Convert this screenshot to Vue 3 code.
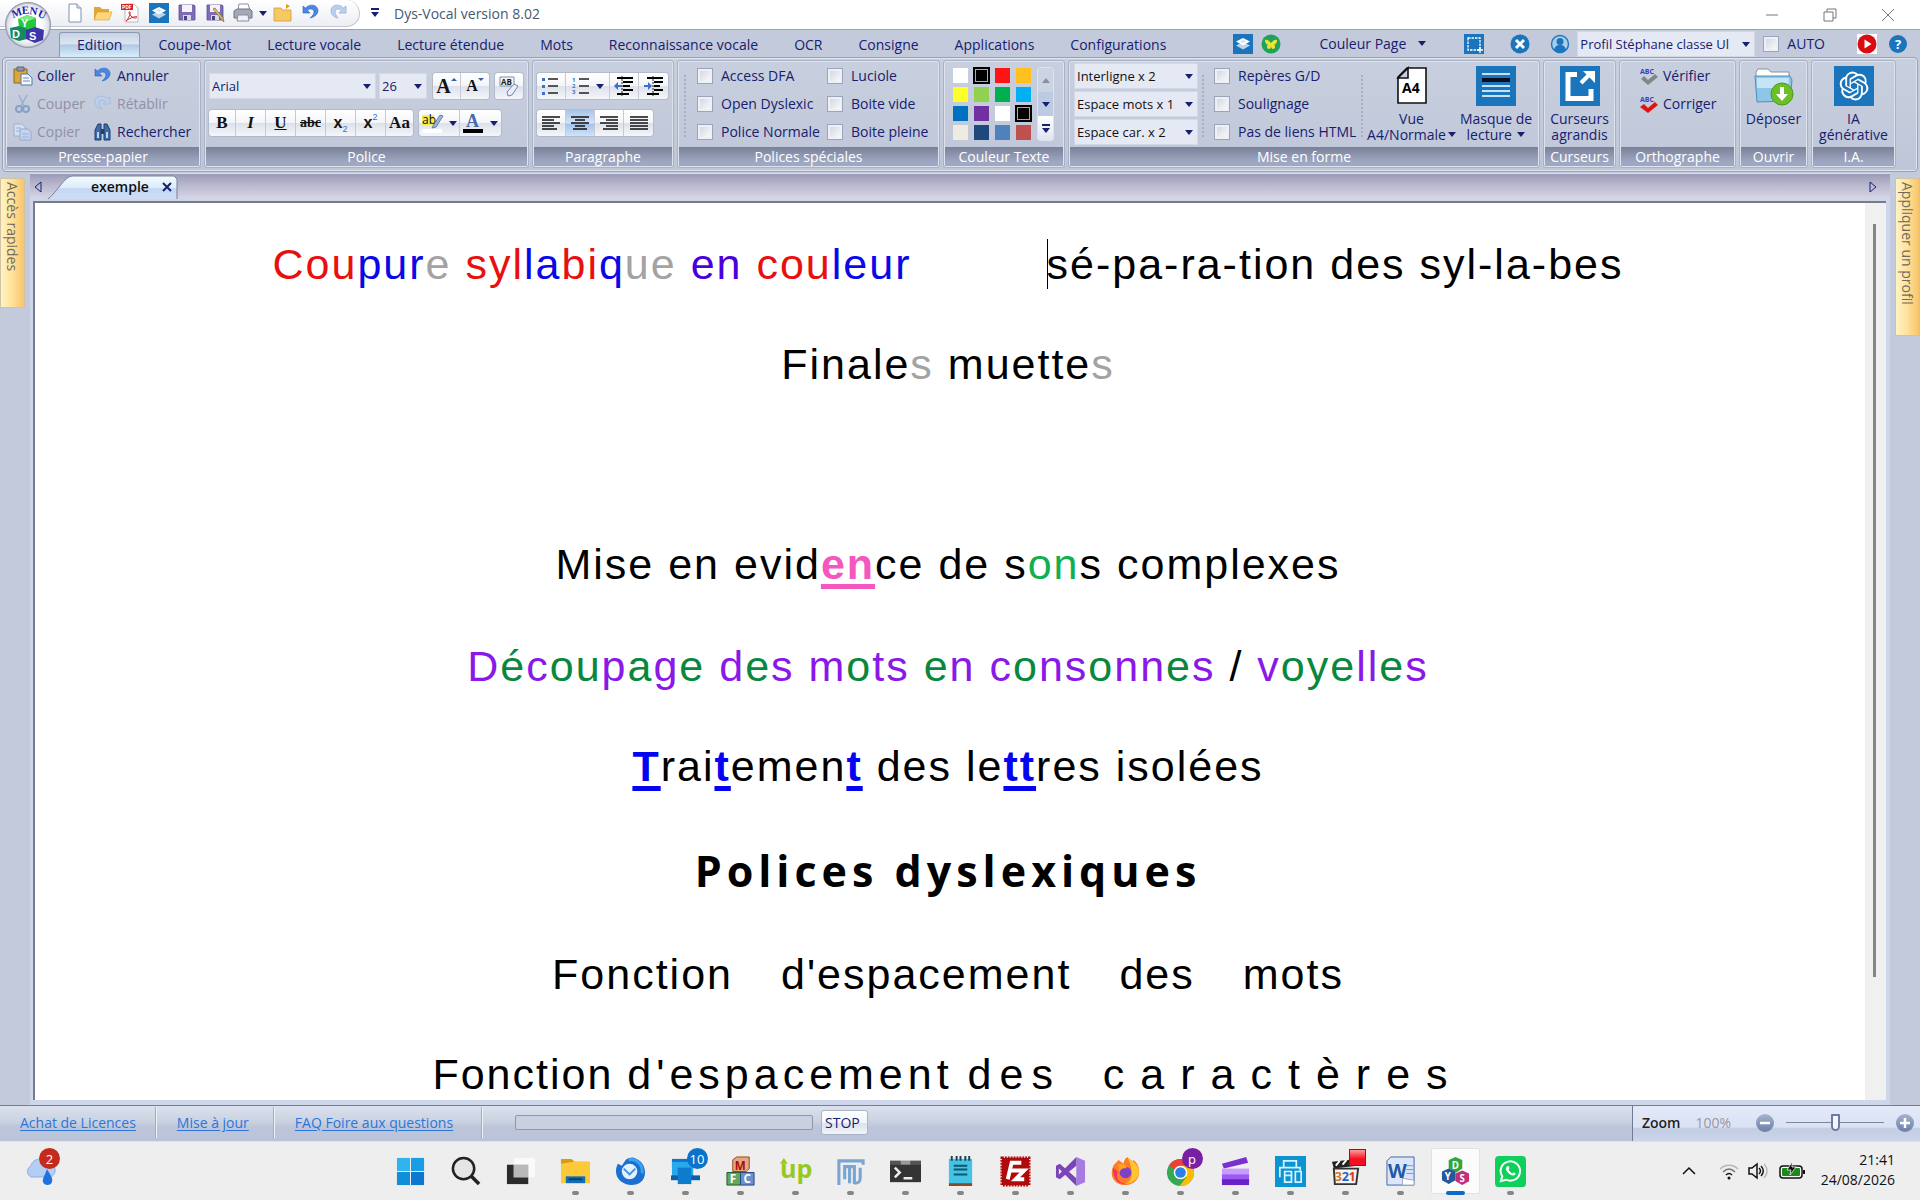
<script setup>
import { ref } from 'vue'

const tabs = ['Edition', 'Coupe-Mot', 'Lecture vocale', 'Lecture étendue', 'Mots', 'Reconnaissance vocale', 'OCR', 'Consigne', 'Applications', 'Configurations']
const colours = ['#ffffff', '#000000', '#ff1414', '#ffc020', '#ffff28', '#92d050', '#00b050', '#00b0f0', '#0070c0', '#7030a0', '#ffffff', '#000000', '#eeece1', '#1f497d', '#4f81bd', '#c0504d']
const spacings = [
  { label: 'Interligne', value: 'Interligne x 2' },
  { label: 'Espace mots', value: 'Espace mots x 1' },
  { label: 'Espace caractères', value: 'Espace car. x 2' },
]
const zoom = ref(50)

const undo = '<path d="M2 3v7h7L6.500 7.500C9 5 13 6 13 9c0 2-1.500 4-4 6 5-1 8-4 8-7.500C17 2 9 0 4.500 5z" fill="#4d86e0" stroke="#2a5fc0" stroke-width=".6"/>'
const redo = '<path d="M17 3v7h-7l2.500-2.500C10 5 6 6 6 9c0 2 1.500 4 3 6C4 14 2 11 2 7.500 2 2 10 0 14.500 5z" fill="#b9d0f2" stroke="#8fb0df" stroke-width=".8"/>'
const layers = '<path d="M0 0h20v20H0z" fill="#1b75bc"/><path d="M10 8l7 3.500-7 4-7-4z" fill="#bcd4ea"/><path d="M10 4l7 3.500-7 4-7-4z" fill="#fff"/><path d="M7 7.500l3-1.500 3 1.500-3 1.500z" fill="#cfe2f2"/>'
const folder = '<path d="M1 4h6l2 2h7v11H1z" fill="#e0a63a"/><path d="M4 9h15l-3 8H1z" fill="#ffd778" stroke="#d99a2b" stroke-width=".6"/>'
const floppy = '<path d="M2 2h15l1 1v14H2z" fill="#7e6cb8" stroke="#5d4c9b" stroke-width=".8"/><path d="M5 2h10v7H5z" fill="#f4f3fb"/><path d="M6 12h8v5H6z" fill="#d8d8e8"/><path d="M7 13h3v4H7z" fill="#4c4273"/>'

const icons = {
  newDoc: '<path d="M4 1h8l4 4v14H4z" fill="#fff" stroke="#7f93b8"/><path d="M12 1v4h4" fill="#dde6f4" stroke="#7f93b8"/>',
  open: folder,
  pdf: '<path d="M4 1h9l4 4v14H4z" fill="#fff" stroke="#b8b8b8"/><path d="M0 1h12v6H0z" fill="#d3232a"/><text x="1" y="6" font-size="5" font-weight="bold" fill="#fff">PDF</text><path d="M5 18c3-3 5-8 4-9s-2 1 1 4 6 2 6 1-6 0-11 4z" fill="none" stroke="#d3232a"/>',
  layers, save: floppy,
  saveEdit: floppy + '<path d="M8 6l9 11 2 2-1-4-8-10z" fill="#e6c75b" stroke="#6b6b3a" stroke-width=".7"/>',
  print: '<path d="M6 1h9l2 6H5z" fill="#fff" stroke="#8a8f9c"/><path d="M1 8l3-2h13l2 2v7H1z" fill="#a4a9b5" stroke="#6d7382"/><path d="M5 12h10l1 6H4z" fill="#eef1f8" stroke="#8a8f9c"/>',
  folderUp: '<path d="M1 5h7l2 2h8v11H1z" fill="#f7c963" stroke="#d39b35" stroke-width=".8"/><path d="M13 6V1l4 2z" fill="#e59b1c"/>',
  undo, redo,
  paste: '<path d="M1 3h13v14H1z" fill="#dba63c" stroke="#8b6420"/><path d="M4 1h7v4H4z" fill="#8e95a5" stroke="#5c6475"/><path d="M8 8h7l4 4v7H8z" fill="#f5f8ff" stroke="#5577a8"/><path d="M10 12h6M10 15h7" stroke="#6a8cc0"/>',
  cut: '<path d="M6 1l5 11M14 1L8 12" stroke="#8ea6c9" stroke-width="1.600"/><circle cx="6" cy="15" r="3" fill="none" stroke="#6d8fc2" stroke-width="2"/><circle cx="13" cy="15" r="3" fill="none" stroke="#6d8fc2" stroke-width="2"/>',
  copy: '<path d="M1 2h8l3 3v9H1z" fill="#dce7f6" stroke="#8aa8d4"/><path d="M7 7h8l3 3v8H7z" fill="#c7daf3" stroke="#7f9fd0"/><path d="M9 12h7M9 15h7M3 6h5M3 9h4" stroke="#8aa8d4"/>',
  find: '<path d="M2 8l3-6h3v16H2zM17 8l-3-6h-3v16h6z" fill="#3f6aa8" stroke="#20406f"/><path d="M8 7h3v5H8z" fill="#20406f"/><path d="M4 10h2v6H4zM13 10h2v6h-2z" fill="#b9d3f2"/>',
  clear: '<path d="M1 1h14v9H1z" fill="#f4f6fa" stroke="#8190ab"/><text x="2" y="9" font-size="8" font-weight="bold" fill="#222">AB</text><path d="M8 16l7-8 4 2-6 9-4 1z" fill="#e8eefa" stroke="#7684a8"/>',
  highlight: '<path d="M0 3h12v10H0z" fill="#f3ee4a"/><text x="0" y="12" font-size="12" fill="#111">ab</text><path d="M11 14l7-11 3 1-7 11-4 1z" fill="#9db8e0" stroke="#4a6694" stroke-width=".8"/><path d="M0 17h20v4H0z" fill="#fff"/>',
  fontColor: '<text x="3" y="15" font-size="18" font-family="Liberation Serif, serif" font-weight="bold" fill="#4668a8">A</text><path d="M0 17h20v4H0z" fill="#000"/>',
  bullets: '<path d="M7 3h10M7 10h10M7 17h10" stroke="#222" stroke-width="1.400"/><path d="M1 2h3v3H1zM1 9h3v3H1zM1 16h3v3H1z" fill="#3c6fd0"/>',
  numbers: '<path d="M8 3h10M8 10h10M8 17h10" stroke="#222" stroke-width="1.400"/><g font-size="6" font-weight="bold" fill="#3c6fd0"><text x="1" y="6">1</text><text x="1" y="12">2</text><text x="1" y="18">3</text></g>',
  outdent: '<path d="M3 2h16M9 6h10M9 10h7M9 14h10M3 18h12" stroke="#000" stroke-width="1.800"/><path d="M8 0v20" stroke="#222" stroke-dasharray="2 1"/><path d="M0 10l4-4v3h4v2H4v3z" fill="#3c6fd0"/>',
  indent: '<path d="M3 2h16M10 6h9M10 10h6M10 14h9M3 18h12" stroke="#000" stroke-width="1.800"/><path d="M9 0v20" stroke="#222" stroke-dasharray="2 1"/><path d="M8 10L4 6v3H0v2h4v3z" fill="#3c6fd0"/>',
  left: '<path d="M1 4h18M1 7h12M1 10h18M1 13h12M1 16h15" stroke="#111" stroke-width="1.500"/>',
  center: '<path d="M1 4h18M5 7h10M1 10h18M5 13h10M3 16h14" stroke="#111" stroke-width="1.500"/>',
  right: '<path d="M1 4h18M7 7h12M1 10h18M7 13h12M4 16h15" stroke="#111" stroke-width="1.500"/>',
  justify: '<path d="M1 4h18M1 7h18M1 10h18M1 13h18M1 16h18" stroke="#111" stroke-width="1.500"/>',
  butterfly: '<circle cx="10" cy="10" r="9.500" fill="#1fa35b"/><path d="M10 9C8 6 5 5 4 6c0 3 1 4 3 5-2 1-1 4 1 4 1 0 2-1 2-3 0 2 1 3 2 3 2 0 3-3 1-4 2-1 3-2 3-5-1-1-4 0-6 3z" fill="#f2e230"/>',
  crop: '<path d="M0 0h20v20H0z" fill="#1b75bc"/><path d="M4 4h12v12H4z" fill="none" stroke="#fff" stroke-width="1.300" stroke-dasharray="2.500 1"/><path d="M16 13v6M13 16h6" stroke="#fff" stroke-width="1.300"/>',
  close: '<circle cx="10" cy="10" r="9.500" fill="#1b75bc"/><path d="M6 6l8 8M14 6l-8 8" stroke="#fff" stroke-width="3"/>',
  user: '<circle cx="10" cy="10" r="8.500" fill="#a9cdea" stroke="#1b75bc" stroke-width="1.400"/><circle cx="10" cy="7.500" r="3.500" fill="#1b75bc"/><path d="M4 16c1-4 3-5 6-5s5 1 6 5c-3 3-9 3-12 0z" fill="#1b75bc"/>',
  play: '<path d="M0 0h20v20H0z" fill="#fff"/><circle cx="10" cy="10" r="9.500" fill="#d80d12"/><path d="M7.500 5.500l7 4.500-7 4.500z" fill="#fff"/>',
  help: '<circle cx="10" cy="10" r="9" fill="#1b75bc"/><text x="7" y="15" font-size="13" font-weight="bold" fill="#fff">?</text>',
  a4: '<path d="M15 2h19v35H6V11z" fill="#fff" stroke="#111" stroke-width="1.600"/><path d="M16 2v10H6z" fill="#c9cddc" stroke="#111" stroke-width="1.600"/><text x="10" y="27" font-size="14" font-weight="bold" fill="#000">A4</text>',
  mask: '<path d="M0 0h40v40H0z" fill="#1b75bc"/><path d="M6 8h28M6 20h28M6 25h28M6 30h28" stroke="#c6e2f5" stroke-width="2"/><path d="M6 14h28" stroke="#0a1020" stroke-width="4"/>',
  cursor: '<path d="M0 0h40v40H0z" fill="#1b75bc"/><path d="M17 8.500H8v24h23V23" fill="none" stroke="#fff" stroke-width="5"/><path d="M21 17l8-8" stroke="#fff" stroke-width="4"/><path d="M23 5h12v12z" fill="#fff"/>',
  deposit: '<path d="M2 6l2-3h10l3 3h18v8H2z" fill="#fff" stroke="#8a8f9c"/><path d="M1 10h35l2 4-2 21-33 1z" fill="#8fc6e8" stroke="#4d8fb8"/><path d="M3 12h32l-1 10H3z" fill="#c5e5f6"/><circle cx="28" cy="28" r="11" fill="#6cbf26" stroke="#4d9a18"/><path d="M26 21h4v7h4l-6 7-6-7h4z" fill="#fff"/>',
  gpt: '<path d="M0 0h40v40H0z" fill="#1b75bc"/><path transform="translate(5.600 5.600) scale(1.200)" fill="#fff" d="M22.2819 9.8211a5.9847 5.9847 0 0 0-.5157-4.9108 6.0462 6.0462 0 0 0-6.5098-2.9A6.0651 6.0651 0 0 0 4.9807 4.1818a5.9847 5.9847 0 0 0-3.9977 2.9 6.0462 6.0462 0 0 0 .7427 7.0966 5.98 5.98 0 0 0 .511 4.9107 6.051 6.051 0 0 0 6.5146 2.9001A5.9847 5.9847 0 0 0 13.2599 24a6.0557 6.0557 0 0 0 5.7718-4.2058 5.9894 5.9894 0 0 0 3.9977-2.9001 6.0557 6.0557 0 0 0-.7475-7.0729zm-9.022 12.6081a4.4755 4.4755 0 0 1-2.8764-1.0408l.1419-.0804 4.7783-2.7582a.7948.7948 0 0 0 .3927-.6813v-6.7369l2.02 1.1686a.071.071 0 0 1 .038.052v5.5826a4.504 4.504 0 0 1-4.4945 4.4944zm-9.6607-4.1254a4.4708 4.4708 0 0 1-.5346-3.0137l.142.0852 4.783 2.7582a.7712.7712 0 0 0 .7806 0l5.8428-3.3685v2.3324a.0804.0804 0 0 1-.0332.0615L9.74 19.9502a4.4992 4.4992 0 0 1-6.1408-1.6464zM2.3408 7.8956a4.485 4.485 0 0 1 2.3655-1.9728V11.6a.7664.7664 0 0 0 .3879.6765l5.8144 3.3543-2.0201 1.1685a.0757.0757 0 0 1-.071 0l-4.8303-2.7865A4.504 4.504 0 0 1 2.3408 7.872zm16.5963 3.8558L13.1038 8.364 15.1192 7.2a.0757.0757 0 0 1 .071 0l4.8303 2.7913a4.4944 4.4944 0 0 1-.6765 8.1042v-5.6772a.79.79 0 0 0-.407-.667zm2.0107-3.0231l-.142-.0852-4.7735-2.7818a.7759.7759 0 0 0-.7854 0L9.409 9.2297V6.8974a.0662.0662 0 0 1 .0284-.0615l4.8303-2.7866a4.4992 4.4992 0 0 1 6.6802 4.66zM8.3065 12.863l-2.02-1.1638a.0804.0804 0 0 1-.038-.0567V6.0742a4.4992 4.4992 0 0 1 7.3757-3.4537l-.142.0805L8.704 5.459a.7948.7948 0 0 0-.3927.6813zm1.0976-2.3654l2.602-1.4998 2.6069 1.4998v2.9994l-2.5974 1.4997-2.6067-1.4997Z"/>',
  check: '<text x="1" y="8" font-size="7" font-weight="bold" fill="#3a3fc0">ABC</text><path d="M2 13l3-3 4 4 7-6 3 3-10 8z" fill="#7d8a86"/>',
  correct: '<text x="1" y="8" font-size="7" font-weight="bold" fill="#3a3fc0">ABC</text><path d="M1 13l4-3 4 4 7-6 3 3-10 8z" fill="#e01212"/>',
}

const apps = [
  { name: 'Démarrer', svg: '<path d="M2 2h13.500v13.500H2z" fill="#31b4ee"/><path d="M16.500 2H30v13.500H16.500z" fill="#179ee4"/><path d="M2 16.500h13.500V30H2z" fill="#0f8fd9"/><path d="M16.500 16.500H30V30H16.500z" fill="#0a78cf"/>' },
  { name: 'Rechercher', svg: '<circle cx="14" cy="13" r="11" fill="#e3e6e8" stroke="#222" stroke-width="2.600"/><path d="M22 21l8 8" stroke="#222" stroke-width="3.600"/>' },
  { name: 'Vue des tâches', svg: '<path d="M2 9h22v20H2z" fill="#2b2b2b"/><path d="M9 2h22v20H9z" fill="#fff" opacity=".72"/><path d="M9 9h15v13H9z" fill="#b9b9b9"/>' },
  { name: 'Explorateur', dot: 1, svg: '<path d="M1 3h11l3 3h15v5H1z" fill="#d99a10"/><path d="M1 8l13-2h17v22H1z" fill="#fbc93a"/><path d="M6 21h20v7H6z" fill="#0e6fb8"/><path d="M9 24h14" stroke="#063e74" stroke-width="2"/>' },
  { name: 'Thunderbird', dot: 1, svg: '<path d="M3 8l4 2 4-6c3-2 6-3 9-2 7 2 11 8 11 15 0 8-6 13-14 13S1 24 1 16c0-4 1-6 2-8z" fill="#1b6fd2"/><path d="M14 4c9-2 15 6 14 14" fill="none" stroke="#3ba2ee" stroke-width="3"/><circle cx="15" cy="16" r="8" fill="#e2f0ff"/><path d="M9 13l6 6 6-6" fill="none" stroke="#4b8ed8" stroke-width="2"/>' },
  { name: 'Notifications', dot: 1, badge: '10', tone: 'blue', svg: '<path d="M2 3h22v9H2z" fill="#1173c9"/><path d="M2 6h22v17H2z" fill="#29a8ea"/><path d="M1 20h30v5H1z" fill="#0f5fa8"/><path d="M8 12h14v17H8z" fill="#0d7ccf"/>' },
  { name: 'MFC', dot: 1, svg: '<path d="M8 4l4-3h13v12l-3 3H8z" fill="#e9a57e" stroke="#8a4a20"/><path d="M2 17h14v13H2z" fill="#5fa95c" stroke="#265a28"/><path d="M16 17h14v13H16z" fill="#6a8fd0" stroke="#274880"/><text x="10" y="14" font-size="12" font-weight="bold" fill="#a01010">M</text><text x="5" y="28" font-size="12" font-weight="bold" fill="#fff">F</text><text x="19" y="28" font-size="12" font-weight="bold" fill="#fff">C</text>' },
  { name: 'Upwork', dot: 1, svg: '<text x="0" y="23" font-size="26" font-weight="bold" fill="#97c81d">up</text><path d="M0 8l4-6 4 6z" fill="#97c81d"/>' },
  { name: 'pgModeler', dot: 1, svg: '<path d="M4 30V5h25v4M10 24V11h5v17M15 11h5v18M26 12v11c0 4-2 5-6 5" fill="none" stroke="#78a5d2" stroke-width="3.200"/>' },
  { name: 'Terminal', dot: 1, svg: '<path d="M0 5h32v22H0z" fill="#343434"/><path d="M0 5h11v4H0zM21 5h11v4H21z" fill="#555"/><path d="M11 5h10v4H11z" fill="#999"/><path d="M5 12l5 5-5 5M14 23h9" fill="none" stroke="#eee" stroke-width="2.600"/>' },
  { name: 'Bloc-notes', dot: 1, svg: '<path d="M4 3h24v25H4z" fill="#45c3e4"/><path d="M9 10h14M9 14h14M9 19h14" stroke="#0b5570" stroke-width="2"/><path d="M7 0v5M12 0v5M16 0v5M21 0v5M25 0v5" stroke="#134454" stroke-width="2"/><path d="M4 28h24v3H4z" fill="#8b4a22"/>' },
  { name: 'FileZilla', dot: 1, svg: '<path d="M2 2h28v28H2z" fill="#b10a0a" stroke="#b10a0a" stroke-width="3" stroke-dasharray="2 1"/><path d="M8 24l4-17h10M9.500 15h8M16 15h9l-9 9h9" fill="none" stroke="#fff" stroke-width="4"/>' },
  { name: 'Visual Studio', dot: 1, svg: '<path d="M22 1l9 4v22l-9 4z" fill="#a77be0"/><path d="M22 1v9L5 24l-4-2V10l4-2 17 15v8L4 13v6z" fill="#7b45b8"/>' },
  { name: 'Firefox', dot: 1, svg: '<path d="M4 9c-6 12 1 21 12 21 9 0 15-7 14-15 0-5-3-9-6-11l-1 5-5-8c-3 2-4 5-4 7l-5-4z" fill="#ff7a2a"/><path d="M18 1c4 3 12 8 12 15 0 8-8 13-15 13 9-3 10-13 3-28z" fill="#ffc52e"/><path d="M3 12c0 12 6 18 15 17-8 0-13-6-10-13z" fill="#f2335b"/><circle cx="16" cy="17" r="6" fill="#7a42c8"/><path d="M8 9c5-2 10 0 9 4-3-1-7 1-7 4z" fill="#ffa31f"/>' },
  { name: 'Chrome', dot: 1, badge: 'p', tone: 'violet', svg: '<circle cx="16" cy="17" r="14" fill="#34a853"/><path d="M4 10a14 14 0 0 1 24 0L16 17z" fill="#ea4335"/><path d="M28 10H16l6 12-7 9a14 14 0 0 0 13-21z" fill="#fbbc05"/><circle cx="16" cy="17" r="7" fill="#fff"/><circle cx="16" cy="17" r="5.500" fill="#2f7de9"/>' },
  { name: 'Clipchamp', dot: 1, svg: '<path d="M2 8L27 1l2 6L4 13z" fill="#7a2fd0"/><path d="M2 13h28v8H2z" fill="#c79bff"/><path d="M2 19h28v7H2z" fill="#9a5cf0"/><path d="M2 24h28v6H2z" fill="#6a22c8"/>' },
  { name: 'Imprimante', dot: 1, svg: '<path d="M0 0h32v32H0z" fill="#0c93d2"/><path d="M9 11V5h13v6M5 22V12h21v3M10 16h7v11h-7zM10 20h7M21 16h6v11h-6z" fill="none" stroke="#d6f1ff" stroke-width="1.800"/>' },
  { name: 'Lecteur 321', dot: 1, square: 1, svg: '<path d="M2 6l26-3v7L4 13z" fill="#222"/><path d="M6 10l4-5M13 9l4-5M20 8l4-5" stroke="#fff" stroke-width="2"/><path d="M4 13h25l-2 16H5z" fill="#f4f4f4" stroke="#333" stroke-width="2"/><text x="5" y="26" font-size="13" font-weight="bold" fill="#d87a20">3</text><text x="12" y="26" font-size="13" font-weight="bold" fill="#2064c8">2</text><text x="19" y="26" font-size="13" font-weight="bold" fill="#d83a20">1</text>' },
  { name: 'Word', dot: 1, svg: '<path d="M2 5l4-4h24v29H2z" fill="#dbe6f8" stroke="#3b66ac"/><path d="M22 10h7M22 14h7M22 18h7" stroke="#6f95cf"/><text x="3" y="23" font-size="20" font-weight="bold" fill="#2257a8">W</text><path d="M18 23l12 2v5H18z" fill="#fff" stroke="#9ab"/>' },
  { name: 'Dys-Vocal', dot: 1, active: 1, svg: '<path d="M9 4l7-3 7 3v9l-6 4-8-4z" fill="#2fa838"/><path d="M2 16l7-3 7 3v9l-7 4-7-4z" fill="#28589c"/><path d="M16 18l7-3 7 3v8l-7 4-7-4z" fill="#c0307c"/><text x="12" y="13" font-size="10" font-weight="bold" fill="#fff">D</text><text x="5" y="25" font-size="10" font-weight="bold" fill="#fff">Y</text><text x="20" y="27" font-size="10" font-weight="bold" fill="#fff">S</text>' },
  { name: 'WhatsApp', dot: 1, svg: '<rect width="32" height="32" rx="4" fill="#10d05c"/><path d="M6 26l1.500-5a10 10 0 1 1 4 3.500z" fill="none" stroke="#fff" stroke-width="2"/><path d="M12 11c2-2 3 1 3 2l-1 1c1 2 2 3 4 4l1-1c1 0 3 1 2 2-3 4-12-4-9-8z" fill="#fff"/>' },
]
</script>

<template>
  <div class="app">
    <header class="titlebar">
      <div class="quick">
        <button v-for="n in ['newDoc', 'open', 'pdf', 'layers', 'save', 'saveEdit', 'print']" :key="n" class="plain" :aria-label="n"><svg viewBox="0 0 20 20" class="i20" v-html="icons[n]" /></button>
        <i class="caret" />
        <button v-for="n in ['folderUp', 'undo', 'redo']" :key="n" class="plain" :aria-label="n"><svg viewBox="0 0 20 20" class="i20" v-html="icons[n]" /></button>
      </div>
      <button class="plain more" aria-label="Personnaliser"><i class="bar" /><i class="caret" /></button>
      <span class="title">Dys-Vocal version 8.02</span>
      <div class="win">
        <button class="plain" aria-label="Réduire"><svg viewBox="0 0 14 14"><path d="M1 7h12" /></svg></button>
        <button class="plain" aria-label="Restaurer"><svg viewBox="0 0 14 14"><path d="M1 4h9v9H1zM4 4V1h9v9h-3" /></svg></button>
        <button class="plain" aria-label="Fermer"><svg viewBox="0 0 14 14"><path d="M1 1l12 12M13 1L1 13" /></svg></button>
      </div>
    </header>

    <button class="orb" aria-label="Menu">
      <svg viewBox="0 0 48 48">
        <defs><radialGradient id="orb"><stop offset=".6" stop-color="#fff" /><stop offset=".9" stop-color="#dde0e8" /><stop offset="1" stop-color="#7e8596" /></radialGradient></defs>
        <circle cx="24" cy="24" r="23" fill="url(#orb)" />
        <path d="M14 18l9-4 9 3v9l-8 4-9-4z" fill="#23c93c" /><path d="M14 18l9-4 9 3-8 3z" fill="#7be97f" />
        <path d="M6 27l9-2 8 3v10l-8 2-8-3z" fill="#128a62" /><path d="M22 29l9-3 9 3-1 10-8 3-9-4z" fill="#3c36a8" />
        <text x="17" y="26" class="g">Y</text><text x="8" y="37" class="g">D</text><text x="25" y="39" class="g">S</text>
        <g class="m"><text x="9" y="17" transform="rotate(-20 9 17)">M</text><text x="18" y="13" transform="rotate(-4 18 13)">E</text><text x="25" y="13" transform="rotate(10 25 13)">N</text><text x="33" y="15" transform="rotate(26 33 15)">U</text></g>
      </svg>
    </button>

    <nav class="tabs">
      <button v-for="(t, i) in tabs" :key="t" class="tab" :class="{ on: i === 0 }">{{ t }}</button>
      <div class="tools">
        <button class="plain" aria-label="Calques"><svg viewBox="0 0 20 20" class="i20" v-html="icons.layers" /></button>
        <button class="plain fly" aria-label="Papillon"><svg viewBox="0 0 20 20" class="i20" v-html="icons.butterfly" /></button>
        <button class="plain page">Couleur Page <i class="caret" /></button>
        <button class="plain" aria-label="Capture"><svg viewBox="0 0 20 20" class="i20" v-html="icons.crop" /></button>
        <button class="plain off" aria-label="Arrêter"><svg viewBox="0 0 20 20" class="i20" v-html="icons.close" /></button>
        <button class="plain usr" aria-label="Profil"><svg viewBox="0 0 20 20" class="i20" v-html="icons.user" /></button>
        <span class="pick profile"><select aria-label="Profil"><option>Profil Stéphane classe Ul</option></select><i class="caret" /></span>
        <label class="check auto"><input type="checkbox" />AUTO</label>
        <button class="plain" aria-label="Lire"><svg viewBox="0 0 20 20" class="i20" v-html="icons.play" /></button>
        <button class="plain hlp" aria-label="Aide"><svg viewBox="0 0 20 20" class="i20" v-html="icons.help" /></button>
      </div>
    </nav>

    <div class="ribbon">
      <section class="group clip">
        <div class="body">
          <div class="col wide">
            <button class="cmd"><svg viewBox="0 0 20 20" class="i20" v-html="icons.paste" />Coller</button>
            <button class="cmd" disabled><svg viewBox="0 0 20 20" class="i20" v-html="icons.cut" />Couper</button>
            <button class="cmd" disabled><svg viewBox="0 0 20 20" class="i20" v-html="icons.copy" />Copier</button>
          </div>
          <div class="col">
            <button class="cmd"><svg viewBox="0 0 20 20" class="i20" v-html="icons.undo" />Annuler</button>
            <button class="cmd" disabled><svg viewBox="0 0 20 20" class="i20" v-html="icons.redo" />Rétablir</button>
            <button class="cmd"><svg viewBox="0 0 20 20" class="i20" v-html="icons.find" />Rechercher</button>
          </div>
        </div>
        <h2>Presse-papier</h2>
      </section>

      <section class="group font">
        <div class="body rows">
          <div class="row">
            <span class="pick face"><select aria-label="Police"><option>Arial</option></select><i class="caret" /></span>
            <span class="pick size"><select aria-label="Taille"><option>26</option></select><i class="caret" /></span>
            <div class="bar-group"><button class="big">A<i class="caret up" /></button><button class="mid">A<i class="caret" /></button></div>
            <div class="bar-group"><button aria-label="Effacer"><svg viewBox="0 0 20 20" class="i20" v-html="icons.clear" /></button></div>
          </div>
          <div class="row">
            <div class="bar-group serif">
              <button><b>B</b></button><button><em>I</em></button><button><u>U</u></button><button class="abc"><s>abc</s></button><button class="x">x<sub>2</sub></button><button class="x">x<sup>2</sup></button><button>Aa</button>
            </div>
            <div class="bar-group drop">
              <button aria-label="Surlignage"><svg viewBox="0 0 22 22" class="i22" v-html="icons.highlight" /><i class="caret" /></button><button aria-label="Couleur"><svg viewBox="0 0 22 22" class="i22" v-html="icons.fontColor" /><i class="caret" /></button>
            </div>
          </div>
        </div>
        <h2>Police</h2>
      </section>

      <section class="group para">
        <div class="body rows">
          <div class="row">
            <div class="bar-group">
              <button aria-label="Puces"><svg viewBox="0 0 20 20" class="i20" v-html="icons.bullets" /></button>
              <button class="num" aria-label="Numéros"><svg viewBox="0 0 20 20" class="i20" v-html="icons.numbers" /><i class="caret" /></button>
              <button aria-label="Diminuer"><svg viewBox="0 0 20 20" class="i20" v-html="icons.outdent" /></button>
              <button aria-label="Augmenter"><svg viewBox="0 0 20 20" class="i20" v-html="icons.indent" /></button>
            </div>
          </div>
          <div class="row">
            <div class="bar-group">
              <button v-for="n in ['left', 'center', 'right', 'justify']" :key="n" :class="{ sel: n === 'center' }" :aria-label="n"><svg viewBox="0 0 20 20" class="i20" v-html="icons[n]" /></button>
            </div>
          </div>
        </div>
        <h2>Paragraphe</h2>
      </section>

      <section class="group spec">
        <div class="body">
          <i class="dots" />
          <div class="col first"><label v-for="t in ['Access DFA', 'Open Dyslexic', 'Police Normale']" :key="t" class="check"><input type="checkbox" />{{ t }}</label></div>
          <div class="col"><label v-for="t in ['Luciole', 'Boite vide', 'Boite pleine']" :key="t" class="check"><input type="checkbox" />{{ t }}</label></div>
        </div>
        <h2>Polices spéciales</h2>
      </section>

      <section class="group color">
        <div class="body">
          <div class="swatches"><button v-for="(c, i) in colours" :key="i" :class="{ ring: c === '#000000' }" :style="{ background: c }" :aria-label="c" /></div>
          <div class="scroller"><button aria-label="Haut"><i class="caret up" /></button><button class="down" aria-label="Bas"><i class="caret" /></button><button aria-label="Plus"><i class="bar" /><i class="caret" /></button></div>
        </div>
        <h2>Couleur Texte</h2>
      </section>

      <section class="group layout">
        <div class="body">
          <div class="col picks"><span v-for="s in spacings" :key="s.label" class="pick"><select :aria-label="s.label"><option>{{ s.value }}</option></select><i class="caret" /></span></div>
          <i class="dots" />
          <div class="col marks"><label v-for="t in ['Repères G/D', 'Soulignage', 'Pas de liens HTML']" :key="t" class="check"><input type="checkbox" />{{ t }}</label></div>
          <i class="dots" />
          <button class="large"><svg viewBox="0 0 40 40" v-html="icons.a4" /><span>Vue<br />A4/Normale<i class="caret" /></span></button>
          <button class="large"><svg viewBox="0 0 40 40" v-html="icons.mask" /><span>Masque de<br />lecture <i class="caret" /></span></button>
        </div>
        <h2>Mise en forme</h2>
      </section>

      <section class="group curs">
        <div class="body"><button class="large"><svg viewBox="0 0 40 40" v-html="icons.cursor" /><span>Curseurs<br />agrandis</span></button></div>
        <h2>Curseurs</h2>
      </section>

      <section class="group ortho">
        <div class="body">
          <div class="col">
            <button class="cmd"><svg viewBox="0 0 20 20" class="i20" v-html="icons.check" />Vérifier</button>
            <button class="cmd"><svg viewBox="0 0 20 20" class="i20" v-html="icons.correct" />Corriger</button>
          </div>
        </div>
        <h2>Orthographe</h2>
      </section>

      <section class="group open">
        <div class="body"><button class="large"><svg viewBox="0 0 40 40" v-html="icons.deposit" /><span>Déposer</span></button></div>
        <h2>Ouvrir</h2>
      </section>

      <section class="group ai">
        <div class="body"><button class="large"><svg viewBox="0 0 40 40" v-html="icons.gpt" /><span>IA<br />générative</span></button></div>
        <h2>I.A.</h2>
      </section>
    </div>

    <main class="work">
      <button class="side">Accès rapides</button>
      <div class="center">
        <div class="strip">
          <button class="plain arrow" aria-label="Précédent"><svg viewBox="0 0 10 12"><path d="M7 1v10L1 6z" /></svg></button>
          <div class="doctab">
            <svg viewBox="0 0 130 24" preserveAspectRatio="none">
              <defs><linearGradient id="dt" x2="0" y2="1"><stop offset="0" stop-color="#f3fcff" /><stop offset=".5" stop-color="#dcecfa" /><stop offset=".55" stop-color="#c2d8f5" /><stop offset="1" stop-color="#cfdcf4" /></linearGradient></defs>
              <path d="M0 24C10 16 16 2 24 1h102l3 3v20" fill="url(#dt)" stroke="#7b8296" />
            </svg>
            <span>exemple</span>
            <button class="plain" aria-label="Fermer exemple"><svg viewBox="0 0 10 10"><path d="M1 1l8 8M9 1L1 9" /></svg></button>
          </div>
          <button class="plain arrow next" aria-label="Suivant"><svg viewBox="0 0 10 12"><path d="M2 1v10l6-5z" /></svg></button>
        </div>
        <div class="paper">
          <article class="text">
            <p><span class="r">Cou</span><span class="b">pur</span><span class="s">e</span> <span class="r">syl</span><span class="b">la</span><span class="r">bi</span><span class="b">q</span><span class="s">ue</span> <span class="v">en</span> <span class="r">cou</span><span class="b">leur</span><span class="tabstop" /><i class="cursor" />sé-pa-ra-tion des syl-la-bes</p>
            <p>Finale<span class="s">s</span> muette<span class="s">s</span></p>
            <p>&nbsp;</p>
            <p>Mise en evid<u class="pink">en</u>ce de s<span class="g">on</span>s complexes</p>
            <p class="tall"><span v-for="(c, i) in 'Découpage des mots en consonnes'" :key="i" :class="'éeouay'.includes(c) ? 'vo' : 'co'">{{ c }}</span> / <span v-for="(c, i) in 'voyelles'" :key="'b' + i" :class="'eoy'.includes(c) ? 'vo' : 'co'">{{ c }}</span></p>
            <p><u class="iso">T</u>rai<u class="iso">t</u>emen<u class="iso">t</u> des le<u class="iso">tt</u>res isolées</p>
            <p class="dysl">Polices dyslexiques</p>
            <p class="spaced"><span>Fonction</span> <span>d'espacement</span> <span>des</span> <span>mots</span></p>
            <p>Fonction <span class="sp1">d'espacement</span> <span class="sp2">des</span> <span class="sp3">&nbsp;caractères</span></p>
          </article>
          <div class="scroll"><i /></div>
        </div>
      </div>
      <button class="side right">Appliquer un profil</button>
    </main>

    <footer class="status">
      <a href="#licences">Achat de Licences</a>
      <a href="#maj">Mise à jour</a>
      <a href="#faq">FAQ Foire aux questions</a>
      <div class="progress" role="progressbar" aria-label="Progression" />
      <button class="stop">STOP</button>
      <div class="zoom">
        <label for="zoom">Zoom</label><output for="zoom">100%</output>
        <button class="round" aria-label="Zoom arrière"><svg viewBox="0 0 18 18"><path d="M4 9h10" /></svg></button>
        <input id="zoom" v-model="zoom" type="range" min="0" max="100" />
        <button class="round" aria-label="Zoom avant"><svg viewBox="0 0 18 18"><path d="M4 9h10M9 4v10" /></svg></button>
      </div>
    </footer>

    <footer class="taskbar">
      <button class="weather" aria-label="Météo">
        <svg viewBox="0 0 32 32"><path d="M6 22a6 6 0 0 1 0-11C7 4 17 1 21 9c7-1 10 4 9 8s-4 5-7 5z" fill="#b4cdf3" stroke="#8fb0e6" /><path d="M22 14c4 7 6 9 5 13-1 4-8 4-9 0-1-3 2-7 4-13z" fill="#1f73e0" /></svg>
        <span class="badge red">2</span>
      </button>
      <div class="apps">
        <button v-for="a in apps" :key="a.name" class="app-btn" :class="{ active: a.active }" :aria-label="a.name">
          <svg viewBox="0 0 32 32" v-html="a.svg" />
          <span v-if="a.badge" class="badge" :class="a.tone">{{ a.badge }}</span>
          <i v-if="a.square" class="rec" />
          <i v-if="a.dot" class="dot" />
        </button>
      </div>
      <div class="tray">
        <svg viewBox="0 0 20 20" class="chev"><path d="M4 13l6-6 6 6" /></svg>
        <svg viewBox="0 0 20 20" class="wifi"><path d="M1 8c5-5 13-5 18 0" stroke="#b5b5b5" /><path d="M4 11c4-4 8-4 12 0" stroke="#777" /><path d="M7 14c2-2 4-2 6 0" /><circle cx="10" cy="17" r="1.500" fill="#111" stroke="none" /></svg>
        <svg viewBox="0 0 20 20" class="snd"><path d="M2 7h3l5-4v14l-5-4H2zM12 7c2 2 2 4 0 6M14 5c3 3 3 7 0 10" /><path d="M17 3c4 4 4 10 0 14" stroke="#bbb" /></svg>
        <svg viewBox="0 0 26 20" class="bat"><rect x="1" y="5" width="22" height="12" rx="3" fill="#fff" /><rect x="3" y="7" width="18" height="8" rx="1" fill="#1d8a1d" stroke="none" /><path d="M25 9v4" stroke-width="2" /><path d="M13 1l-5 8h4l-1 5 6-8h-4z" fill="#111" stroke="#eee" stroke-width=".8" /></svg>
        <time>21:41<br />24/08/2026</time>
      </div>
    </footer>
  </div>
</template>

<style>
body { margin: 0; }
</style>

<style scoped>
.app { position: relative; display: flex; flex-direction: column; height: 100vh; overflow: hidden; background: #c3cadb; color: #17206f; font: 14px/16px "Open Sans", "Noto Sans", sans-serif; }
button, select, input { font: inherit; color: inherit; margin: 0; }
button { padding: 0; border: 0; background: none; }
svg { display: block; overflow: visible; }
h2, p { margin: 0; font-weight: normal; }
.plain { display: flex; align-items: center; }
.i20 { width: 20px; height: 20px; flex: none; }
.i22 { width: 22px; height: 22px; flex: none; }
.caret { display: inline-block; flex: none; width: 0; height: 0; border: 4px solid transparent; border-top: 5px solid #17206f; border-bottom: 0; }
.caret.up { border-top: 0; border-bottom: 5px solid #8a8fa5; }
.bar { width: 8px; height: 2px; background: #17206f; }

.titlebar { display: flex; align-items: center; box-sizing: border-box; height: 30px; background: #fff; border-bottom: 1px solid #9aa3b5; }
.quick { display: flex; align-items: center; gap: 8px; box-sizing: border-box; height: 27px; width: 360px; margin-bottom: 2px; padding-left: 65px; border: 1px solid #c3c7d2; border-left: 0; border-top: 0; border-radius: 0 14px 14px 0; background: linear-gradient(#fff, #eceef4); }
.quick .caret { margin: 0 -2px; }
.more { flex-direction: column; gap: 2px; margin: 0 15px 4px 11px; }
.title { color: #45596f; margin-bottom: 2px; }
.win { display: flex; gap: 44px; margin-left: auto; padding-right: 25px; }
.win svg { width: 14px; height: 14px; fill: none; stroke: #777; }

.orb { position: absolute; left: 4px; top: 1px; z-index: 2; }
.orb svg { width: 48px; height: 48px; }
.orb .g { font: bold 11px "Liberation Sans", sans-serif; fill: #fff; }
.orb .m { font: bold 11px "Liberation Serif", serif; fill: #2020a8; }

.tabs { display: flex; height: 27px; padding-left: 59px; }
.tab { padding: 0 17px; border: 1px solid transparent; border-bottom: 0; margin-top: 2px; white-space: nowrap; }
.tab.on { border-color: #8e9ab5; border-radius: 3px 3px 0 0; background: linear-gradient(#c9d2e2, #dbe5f2 45%, #b2c8e4 50%, #d5f0fd); }
.tools { display: flex; align-items: center; margin-left: auto; padding-right: 12px; }
.fly { margin-left: 8px; }
.page { gap: 12px; margin: 0 38px; }
.off { margin-left: 26px; }
.usr { margin: 0 7px 0 20px; }
.profile { width: 178px; height: 26px; }
.auto { margin: 0 32px 0 8px; }
.hlp { margin-left: 11px; }

.pick { position: relative; display: flex; background: #e5e9f3; border: 1px solid #d3d9e6; box-sizing: border-box; height: 26px; overflow: hidden; }
.pick select { appearance: none; flex: 1; width: 100%; min-width: 0; border: 0; background: none; padding: 0 14px 0 2px; outline: 0; font-size: 13px; }
.pick .caret { position: absolute; right: 4px; top: 10px; pointer-events: none; }
.check { display: flex; align-items: center; gap: 8px; white-space: nowrap; }
.check input { appearance: none; width: 16px; height: 16px; border: 1px solid #9aa5bb; background: linear-gradient(135deg, #ccd2dd, #fff); box-shadow: inset 0 0 0 2px #eef0f5; }

.ribbon { display: flex; gap: 3px; box-sizing: border-box; height: 115px; margin: 0 2px; padding: 2px; border: 1px solid #97a0b5; border-radius: 4px; box-shadow: inset 0 0 0 1px #dfe4ee; background: linear-gradient(#c8d0df, #c2c9da 70%, #bdc5d7); }
.group { display: flex; flex-direction: column; flex: none; box-sizing: border-box; height: 108px; padding: 1px; border: 1px solid #aab3c6; border-radius: 3px; box-shadow: inset 0 0 0 1px #dde2ec; }
.group h2 { height: 19px; line-height: 20px; font-size: 14px; text-align: center; color: #fff; background: linear-gradient(#7a8199, #9fa8c3 80%); }
.body { display: flex; flex: 1; }
.col { display: grid; grid-template-rows: repeat(3, 28px); }
.clip { width: 196px; } .font { width: 325px; } .para { width: 142px; } .spec { width: 263px; } .color { width: 122px; }
.layout { width: 472px; } .curs { width: 73px; } .ortho { width: 117px; } .open { width: 69px; } .ai { width: 85px; }
.clip .body { padding-left: 6px; }
.clip .wide { width: 80px; }
.cmd { display: flex; align-items: center; gap: 4px; white-space: nowrap; }
.cmd:disabled { color: #938fa5; }
.cmd:disabled svg { opacity: .7; }
.rows { flex-direction: column; gap: 11px; padding: 11px 0 0 3px; }
.row { display: flex; gap: 6px; }
.face { width: 167px; } .size { width: 48px; margin-left: -3px; }
.bar-group { display: flex; height: 26px; border-radius: 3px; box-shadow: 0 0 0 1px #b3bbcb; background: linear-gradient(#fff, #f4f5f9 48%, #dde1ea 52%, #f4f6fa); }
.bar-group button { display: flex; align-items: center; justify-content: center; width: 28px; border-right: 1px solid #c5cad6; box-sizing: border-box; }
.bar-group button:last-child { border-right: 0; }
.serif button { width: 30px; color: #111; font: bold 17px/20px "Liberation Serif", serif; }
.serif button:first-child, .serif button:last-child { width: 27px; }
.serif .abc { font-size: 14px; }
.serif .x { font-family: "Liberation Sans", sans-serif; font-size: 16px; }
.serif sub, .serif sup { font: 9px/9px "Liberation Sans", sans-serif; color: #3c6fd0; }
.serif sub { align-self: flex-end; margin-bottom: 2px; } .serif sup { align-self: flex-start; margin-top: 3px; }
.bar-group .big, .bar-group .mid { color: #111; font: bold 20px/22px "Liberation Serif", serif; }
.bar-group .mid { font-size: 16px; }
.big .caret, .mid .caret { align-self: flex-start; margin-top: 5px; border-width: 3px; border-top-color: #3c5fa8; border-bottom: 0; }
.big .caret.up { border-top: 0; border-bottom: 3px solid #3c5fa8; }
.drop button { width: 41px; gap: 5px; }
.para .bar-group button { width: 29px; } .para .bar-group .num { width: 44px; gap: 5px; }
.bar-group .sel { background: linear-gradient(#a9c4e8, #d4e4f7 50%, #a5c3ea 55%, #cfe4fa); }
.dots { flex: none; width: 0; height: 62px; margin-top: 13px; border-left: 2px dotted #a7afc2; }
.spec .body { padding-left: 5px; }
.first { width: 130px; margin-left: 11px; }
.color .body { gap: 5px; padding: 5px 0 0 7px; }
.swatches { display: grid; grid-template-columns: repeat(4, 15px); grid-template-rows: repeat(4, 15px); gap: 4px 6px; padding: 1px; }
.swatches .ring { box-shadow: inset 0 0 0 1px #000, inset 0 0 0 2px #e0a63a, 0 0 0 1px #000; }
.scroller { display: flex; flex-direction: column; width: 17px; height: 74px; border: 1px solid #dde2ec; border-radius: 3px; box-sizing: border-box; }
.scroller button { flex: 1; display: flex; flex-direction: column; gap: 2px; align-items: center; justify-content: center; background: #ccd3e2; }
.scroller .down { background: #bccae4; }
.scroller button:last-child { background: linear-gradient(#fff, #dfe4ee); }
.layout .body { padding-left: 4px; }
.picks { width: 124px; align-items: center; color: #111; margin-right: 4px; }
.marks { width: 135px; margin: 0 0 0 10px; }
.marks + .dots { margin-left: 12px; }
.large { display: flex; flex-direction: column; align-items: center; padding-top: 4px; flex: 1; white-space: nowrap; justify-content: flex-start; }
.large svg { width: 40px; height: 40px; margin-bottom: 5px; }
.large .caret { vertical-align: 3px; margin-left: 2px; }
.layout .large { flex: none; width: 85px; margin-left: 6px; }
.layout .large + .large { margin-left: 0; width: 84px; }
.ortho .body { padding-left: 18px; }

.work { display: flex; flex: 1; min-height: 0; gap: 5px; padding-top: 1px; }
.side { align-self: flex-start; writing-mode: vertical-rl; box-sizing: border-box; width: 25px; height: 130px; margin-top: 5px; padding: 3px 0; text-align: left; line-height: 24px; color: #6f6a5c; background: linear-gradient(90deg, #fff3c4, #ffe19a 50%, #f8c469); border: 1px solid #cfc3a4; }
.side.right { height: 158px; }
.center { display: flex; flex-direction: column; flex: 1; min-width: 0; background: #cdd6ea; }
.strip { display: flex; align-items: center; height: 25px; background: linear-gradient(#9c9bb8, #b9b8ce 45%, #d6d7e6); border-top: 1px solid #d8dce8; }
.arrow { margin: 0 4px; }
.arrow svg { width: 10px; height: 12px; fill: none; stroke: #17206f; }
.next { margin: 0 12px 0 auto; }
.doctab { position: relative; display: flex; align-items: center; align-self: flex-end; gap: 13px; height: 24px; width: 130px; box-sizing: border-box; padding-left: 43px; color: #111; font-weight: 600; }
.doctab > svg { position: absolute; inset: 0; width: 100%; height: 100%; }
.doctab span, .doctab button { position: relative; }
.doctab button svg { width: 10px; height: 10px; stroke: #17206f; stroke-width: 2; }
.paper { display: flex; flex: 1; min-height: 0; margin: 2px 4px 5px 3px; border: solid #777c88; border-width: 2px 0 0 2px; background: #fff; }
.text { flex: 1; min-width: 0; padding: 11px 4px 0 0; overflow: hidden; color: #000; font: 43px/100px "Liberation Sans", Arial, sans-serif; letter-spacing: 2px; text-align: center; white-space: nowrap; }
.text .tall { padding-top: 2px; }
.text .dysl { padding: 5px 0 3px; font-family: "Open Sans", "Noto Sans", sans-serif; font-weight: 700; letter-spacing: 5px; }
.spaced { display: flex; justify-content: center; gap: 48px; }
.r { color: #e8100f; } .b { color: #0808e8; } .s { color: #a3a3a3; } .v { color: #4a00dc; } .g { color: #10b050; }
.co { color: #8a18e8; } .vo { color: #08883c; }
.pink, .iso { font-weight: bold; text-decoration-thickness: 5px; text-underline-offset: 5px; }
.pink { color: #f557c0; } .iso { color: #0404f0; }
.tabstop { display: inline-block; width: 135px; }
.cursor { display: inline-block; width: 1px; height: 50px; margin-right: -1px; background: #000; vertical-align: -10px; }
.sp1 { letter-spacing: 5px; } .sp2 { letter-spacing: 8px; } .sp3 { letter-spacing: 16px; }
.scroll { width: 21px; background: #f0f0f0; }
.scroll i { display: block; width: 3px; height: 84%; margin: 21px 0 0 8px; background: #858585; }

.status { display: flex; align-items: center; box-sizing: border-box; height: 36px; padding-bottom: 2px; border-top: 1px solid #737e92; background: linear-gradient(#dbe1ed, #cad1e0 45%, #bcc5d9 60%, #bac3d8); }
.status a { display: flex; align-items: center; box-sizing: border-box; height: 31px; padding: 0 25px 0 20px; color: #2a76dc; border-right: 1px solid #eef1f7; box-shadow: inset -1px 0 #a4adbf; text-underline-offset: 2px; }
.status a:first-child { padding-right: 20px; }
.status a:nth-child(3) { padding-right: 29px; }
.progress { width: 296px; height: 13px; margin: 0 8px 0 32px; border: 1px solid #8c97ab; border-radius: 2px; background: #c9d0e0; }
.stop { width: 47px; height: 25px; border: 1px solid #abb4c6; border-radius: 3px; background: linear-gradient(#fff, #f4f5f9 50%, #dde2ec 55%, #f2f4f9); padding: 0 3px; text-align: left; }
.zoom { display: flex; align-items: center; align-self: stretch; margin: 0 0 -2px auto; padding: 0 6px 2px 9px; border-left: 1px solid #6f7b92; background: linear-gradient(#e3e9f8, #dbe2f3 60%, #c2cce2 65%, #ccd5e9); color: #222; }
.zoom label { font-weight: 600; margin-right: 15px; } .zoom output { color: #9a97a8; margin-right: 25px; }
.round { width: 18px; height: 18px; border-radius: 9px; background: linear-gradient(#a6b3ce, #6b7fa8); }
.round svg { stroke: #fff; stroke-width: 2.5; }
.zoom input { appearance: none; width: 98px; height: 18px; margin: 0 12px; background: linear-gradient(#7d87a0, #7d87a0) center / 100% 1px no-repeat; }
.zoom input::-webkit-slider-thumb { appearance: none; width: 9px; height: 17px; border: 2px solid #6b7ca4; border-radius: 1px 1px 5px 5px; background: #f3f6fc; }

.taskbar { display: grid; grid-template-columns: 1fr auto 1fr; align-items: center; box-sizing: border-box; height: 59px; background: #eeeeee; color: #111; border-top: 1px solid #e2e2e2; }
.weather { position: relative; justify-self: start; margin-left: 25px; }
.weather svg { width: 32px; height: 32px; }
.badge { position: absolute; display: flex; align-items: center; justify-content: center; width: 21px; height: 21px; border-radius: 11px; color: #fff; font-size: 13px; right: 0; top: 2px; }
.weather .badge { right: -3px; top: -7px; }
.red { background: #c42b1c; } .blue { background: #0a73cc; } .violet { background: #7a1fa2; }
.apps { display: flex; }
.app-btn { position: relative; display: flex; align-items: center; justify-content: center; width: 55px; height: 52px; }
.app-btn svg { width: 31px; height: 31px; }
.active { background: #fbfbfb; border-radius: 5px; box-shadow: inset 0 0 0 3px #eee, inset 0 0 0 4px #e2e2e2; }
.dot { position: absolute; left: 24px; bottom: 2px; width: 7px; height: 4px; border-radius: 2px; background: #858585; }
.active .dot { left: 18px; width: 19px; background: #0a6cc8; }
.app-btn .badge { right: 5px; top: 3px; }
.rec { position: absolute; right: 7px; top: 4px; width: 15px; height: 15px; border: 1px solid #7a2020; background: linear-gradient(#ff9a9a, #f01020 60%); }
.tray { display: flex; align-items: center; justify-self: end; padding-right: 25px; }
.tray svg { width: 20px; height: 20px; fill: none; stroke: #111; stroke-width: 1.5; }
.tray .chev { margin-right: 20px; } .tray .snd { margin: 0 12px 0 8px; } .tray .bat { width: 26px; margin-right: 16px; }
.tray time { text-align: right; line-height: 20px; font-size: 14px; margin-bottom: 2px; }
</style>
